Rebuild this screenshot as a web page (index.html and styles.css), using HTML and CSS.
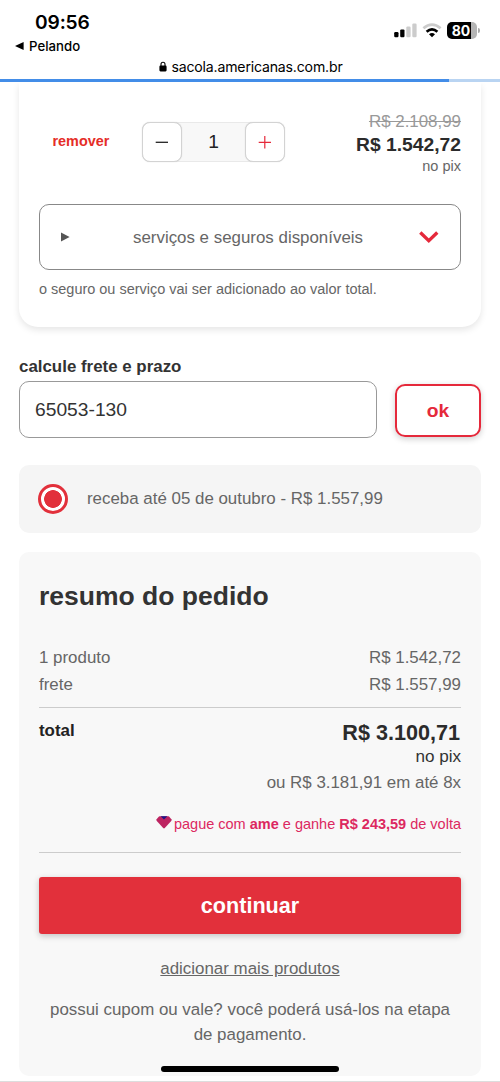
FILE: index.html
```html
<!DOCTYPE html>
<html lang="pt-BR">
<head>
<meta charset="utf-8">
<title>sacola.americanas.com.br</title>
<link rel="stylesheet" href="styles.css">
</head>
<body>
<div class="screen">
  <header class="browser">
    <div class="status">
      <div class="status-left">
        <div class="clock">09:56</div>
        <div class="back"><svg width="9" height="8" viewBox="0 0 9 8"><path d="M0 4 8.6 0V8Z"/></svg><span class="back-label">Pelando</span></div>
      </div>
      <div class="status-right">
        <svg class="signal" width="24" height="15" viewBox="0 0 24 15">
          <rect x="0.2" y="9" width="4.3" height="5.3" rx="1.2"/><rect x="6.2" y="6.4" width="4.3" height="7.9" rx="1.2"/>
          <rect x="12.3" y="3.6" width="4.3" height="10.7" rx="1.2" fill="#ccc"/><rect x="18.3" y="0.6" width="4.3" height="13.7" rx="1.2" fill="#ccc"/>
        </svg>
        <svg class="wifi" width="20" height="15" viewBox="0 0 20 15" fill="none">
          <path d="M1.4 5.3Q10-2.2 18.6 5.3" stroke="#ccc" stroke-width="2.7"/>
          <path d="M4.6 8.7Q10 4.1 15.4 8.7" stroke="#000" stroke-width="2.7"/>
          <path d="M10 14.2 7 11.2Q10 8.9 13 11.2Z" fill="#000"/>
        </svg>
        <div class="battery"><span class="battery-level">80</span></div><i class="battery-tip"></i>
      </div>
    </div>
    <div class="url"><svg width="8" height="11" viewBox="0 0 8 11"><path d="M2 5V3.2a2 2 0 0 1 4 0V5" fill="none" stroke="#000" stroke-width="1.1"/><rect x="0.4" y="4.6" width="7.2" height="5.8" rx="1.1"/></svg><span>sacola.americanas.com.br</span></div>
    <div class="progress"><div class="progress-bar" style="width:449px"></div></div>
  </header>

  <main class="content">
    <section class="item">
      <div class="item-row">
        <a class="remove">remover</a>
        <div class="stepper">
          <span class="step"><svg width="14" height="14" viewBox="0 0 14 14"><path d="M.7 7.3H13" stroke="#222" stroke-width="1.3"/></svg></span>
          <span class="qty">1</span>
          <span class="step"><svg width="14" height="14" viewBox="0 0 14 14"><path d="M.7 7.3H13M6.8 1V13.6" stroke="#e5293b" stroke-width="1.2"/></svg></span>
        </div>
        <div class="prices">
          <div class="old">R$ 2.108,99</div>
          <div class="price">R$ 1.542,72</div>
          <div class="pix">no pix</div>
        </div>
      </div>
      <div class="services">
        <svg width="9" height="10" viewBox="0 0 9 10"><path d="M0 .4 8.6 5 0 9.6Z" fill="#555"/></svg>
        <span class="services-label">serviços e seguros disponíveis</span>
        <svg width="20" height="13" viewBox="0 0 20 13"><path d="M1.3 1.5 9.8 9.8 18.3 1.5" fill="none" stroke="#e5293b" stroke-width="3.3"/></svg>
      </div>
      <p class="note">o seguro ou serviço vai ser adicionado ao valor total.</p>
    </section>

    <label class="ship-label">calcule frete e prazo</label>
    <div class="ship-row">
      <div class="zip">65053-130</div>
      <div class="ok">ok</div>
    </div>
    <div class="option"><span class="radio"></span><span>receba até 05 de outubro - R$ 1.557,99</span></div>

    <section class="summary">
      <h2 class="title">resumo do pedido</h2>
      <div class="line"><span>1 produto</span><span>R$ 1.542,72</span></div>
      <div class="line"><span>frete</span><span>R$ 1.557,99</span></div>
      <div class="total">
        <strong class="total-label">total</strong>
        <div class="total-values">
          <div class="total-price">R$ 3.100,71</div>
          <div class="total-pix">no pix</div>
          <div class="installments">ou R$ 3.181,91 em até 8x</div>
        </div>
      </div>
      <div class="ame">
        <svg class="ame-icon" width="16" height="13" viewBox="0 0 16 13"><path d="M3.6.3H12.4Q13 .3 13.5.9L15.4 3.2Q16 4.2 15.2 5.1L8.8 12Q8 12.8 7.2 12L.8 5.1Q0 4.2.6 3.2L2.5.9Q3 .3 3.6.3Z" fill="#bd2461"/><path d="M4.6.3h6.8L8 3.6Z" fill="#1b1687"/></svg>
        <span>pague com <b>ame</b> e ganhe <b>R$ 243,59</b> de volta</span>
      </div>
      <div class="continue">continuar</div>
      <a class="more">adicionar mais produtos</a>
      <p class="coupon">possui cupom ou vale? você poderá usá-los na etapa<br>de pagamento.</p>
    </section>
  </main>
  <div class="home-indicator"></div>
</div>
</body>
</html>
```
FILE: styles.css
```css
* { box-sizing: border-box; }
body { margin: 0; background: #fff; font-family: "Liberation Sans", Arial, sans-serif; font-size: 16.9px; color: #666; }
svg { display: block; flex: none; }
p, h2 { margin: 0; }
.screen { position: relative; width: 500px; height: 1082px; overflow: hidden; border-bottom: 1px solid #ddd; }

/* Browser chrome */
.browser { height: 83px; font-family: Inter, sans-serif; color: #000; }
.status { display: flex; justify-content: space-between; height: 56px; padding: 10px 20px 0 15px; }
.clock { padding-left: 20px; font-size: 19.2px; line-height: 24px; font-weight: 600; letter-spacing: -.15px; }
.back { display: flex; align-items: center; gap: 5px; height: 24px; font-size: 13.2px; font-weight: 500; letter-spacing: .03px; }
.back-label { line-height: 24px; }
.status-right { display: flex; align-items: center; height: 40px; }
.signal { margin-right: 4px; }
.wifi { margin-right: 5px; }
.battery { width: 30px; height: 17px; border-radius: 5px; background: linear-gradient(90deg, #000 24px, #b5b5b5 24px); color: #fff; text-align: center; }
.battery-level { display: block; font-size: 14px; line-height: 17px; font-weight: 700; padding-right: 2px; }
.battery-tip { width: 2px; height: 5px; margin-left: 1px; border-radius: 0 2px 2px 0; background: #aaa; }
.url { display: flex; justify-content: center; align-items: center; gap: 4px; height: 20px; font-size: 14.1px; letter-spacing: -.18px; padding-left: 2px; }
.progress { height: 3px; margin-top: 3px; background: #b9d4f2; }
.progress-bar { height: 3px; background: #438de8; }

/* Cart item */
.content { padding: 0 19px; }
.item { height: 244px; padding: 26px 20px 0; border-radius: 0 0 19px 19px; box-shadow: 0 3px 7px rgba(0,0,0,.1); clip-path: inset(0 -12px -12px -12px); }
.item-row { display: flex; height: 96px; }
.remove { width: 103px; padding: 24px 0 0 13.5px; color: #e52d27; font-weight: 700; font-size: 14.4px; line-height: 17px; }
.stepper { display: flex; width: 143px; height: 40px; margin-top: 13px; border: 1px solid #e9e9e9; border-radius: 8px; background: #f8f8f8; }
.step { display: flex; align-items: center; justify-content: center; width: 40px; height: 40px; margin: -1px; border: 1.5px solid #d3d3d3; box-shadow: 0 0 1px #ccc; border-radius: 8px; background: #fff; }
.qty { flex: 1; font-size: 19.2px; line-height: 38px; text-align: center; color: #222; }
.prices { flex: 1; padding-top: 1px; text-align: right; }
.old { line-height: 24px; color: #999; text-decoration: line-through; }
.price { line-height: 22px; font-size: 19.25px; font-weight: 700; color: #2b2b2b; }
.pix { font-size: 14.5px; line-height: 20px; }
.services { display: flex; align-items: center; justify-content: space-between; height: 66px; margin-top: -1px; padding: 0 21px; border: 1px solid #888; border-radius: 10px; color: #666; }
.services-label { padding: 2px 0 0 7px; }
.note { margin-top: 9px; font-size: 14.48px; line-height: 20px; }

/* Shipping */
.ship-label { display: block; margin-top: 28px; line-height: 24px; color: #333; font-weight: 700; }
.ship-row { display: flex; align-items: center; justify-content: space-between; margin-top: 2px; }
.zip { width: 358px; height: 57px; padding-left: 15px; border: 1px solid #999; border-radius: 10px; color: #333; font-size: 19.24px; line-height: 55px; }
.ok { width: 86px; height: 53px; margin-top: 1px; border: 2px solid #e5293b; border-radius: 10px; box-shadow: 0 2px 6px rgba(0,0,0,.2); color: #e5293b; font-size: 19.24px; font-weight: 700; line-height: 49px; text-align: center; }
.option { display: flex; align-items: center; gap: 19px; height: 68px; margin-top: 27px; padding-left: 19px; border-radius: 10px; background: #f5f5f5; }
.radio { width: 30px; height: 30px; border: 3px solid #e2303b; border-radius: 50%; background: radial-gradient(circle, #e2303b 8.5px, #fff 9.2px); }

/* Order summary */
.summary { height: 524px; margin-top: 19px; padding: 24px 20px 0; border-radius: 10px; background: #f8f8f8; }
.title { margin-bottom: 28px; font-size: 26.5px; line-height: 40px; color: #333; }
.line { display: flex; justify-content: space-between; line-height: 27px; }
.total { display: flex; justify-content: space-between; height: 101px; margin-top: 9px; padding-top: 12px; border-top: 1px solid #ccc; }
.total-label { line-height: 22px; color: #222; }
.total-values { text-align: right; }
.total-price { padding-right: 1px; font-size: 21.6px; line-height: 26px; font-weight: 700; color: #2b2b2b; }
.total-pix { font-size: 17.1px; line-height: 22px; color: #333; }
.installments { line-height: 29px; }
.ame { display: flex; justify-content: flex-end; align-items: center; gap: 2px; height: 45px; padding-bottom: 13px; border-bottom: 1px solid #ccc; color: #dc2860; font-size: 14.5px; }
.ame-icon { margin-bottom: 2px; }
.continue { height: 57px; margin-top: 24px; border-radius: 3px; background: #e2303b; box-shadow: 0 2px 6px rgba(0,0,0,.22); color: #fff; font-size: 21.6px; font-weight: 700; line-height: 57px; text-align: center; }
.more { display: block; margin-top: 22px; line-height: 25px; text-align: center; text-decoration: underline; }
.coupon { margin-top: 16px; line-height: 25px; text-align: center; white-space: nowrap; }
.home-indicator { position: absolute; left: 161px; top: 1066px; width: 178px; height: 6px; border-radius: 3px; background: #000; }
```
